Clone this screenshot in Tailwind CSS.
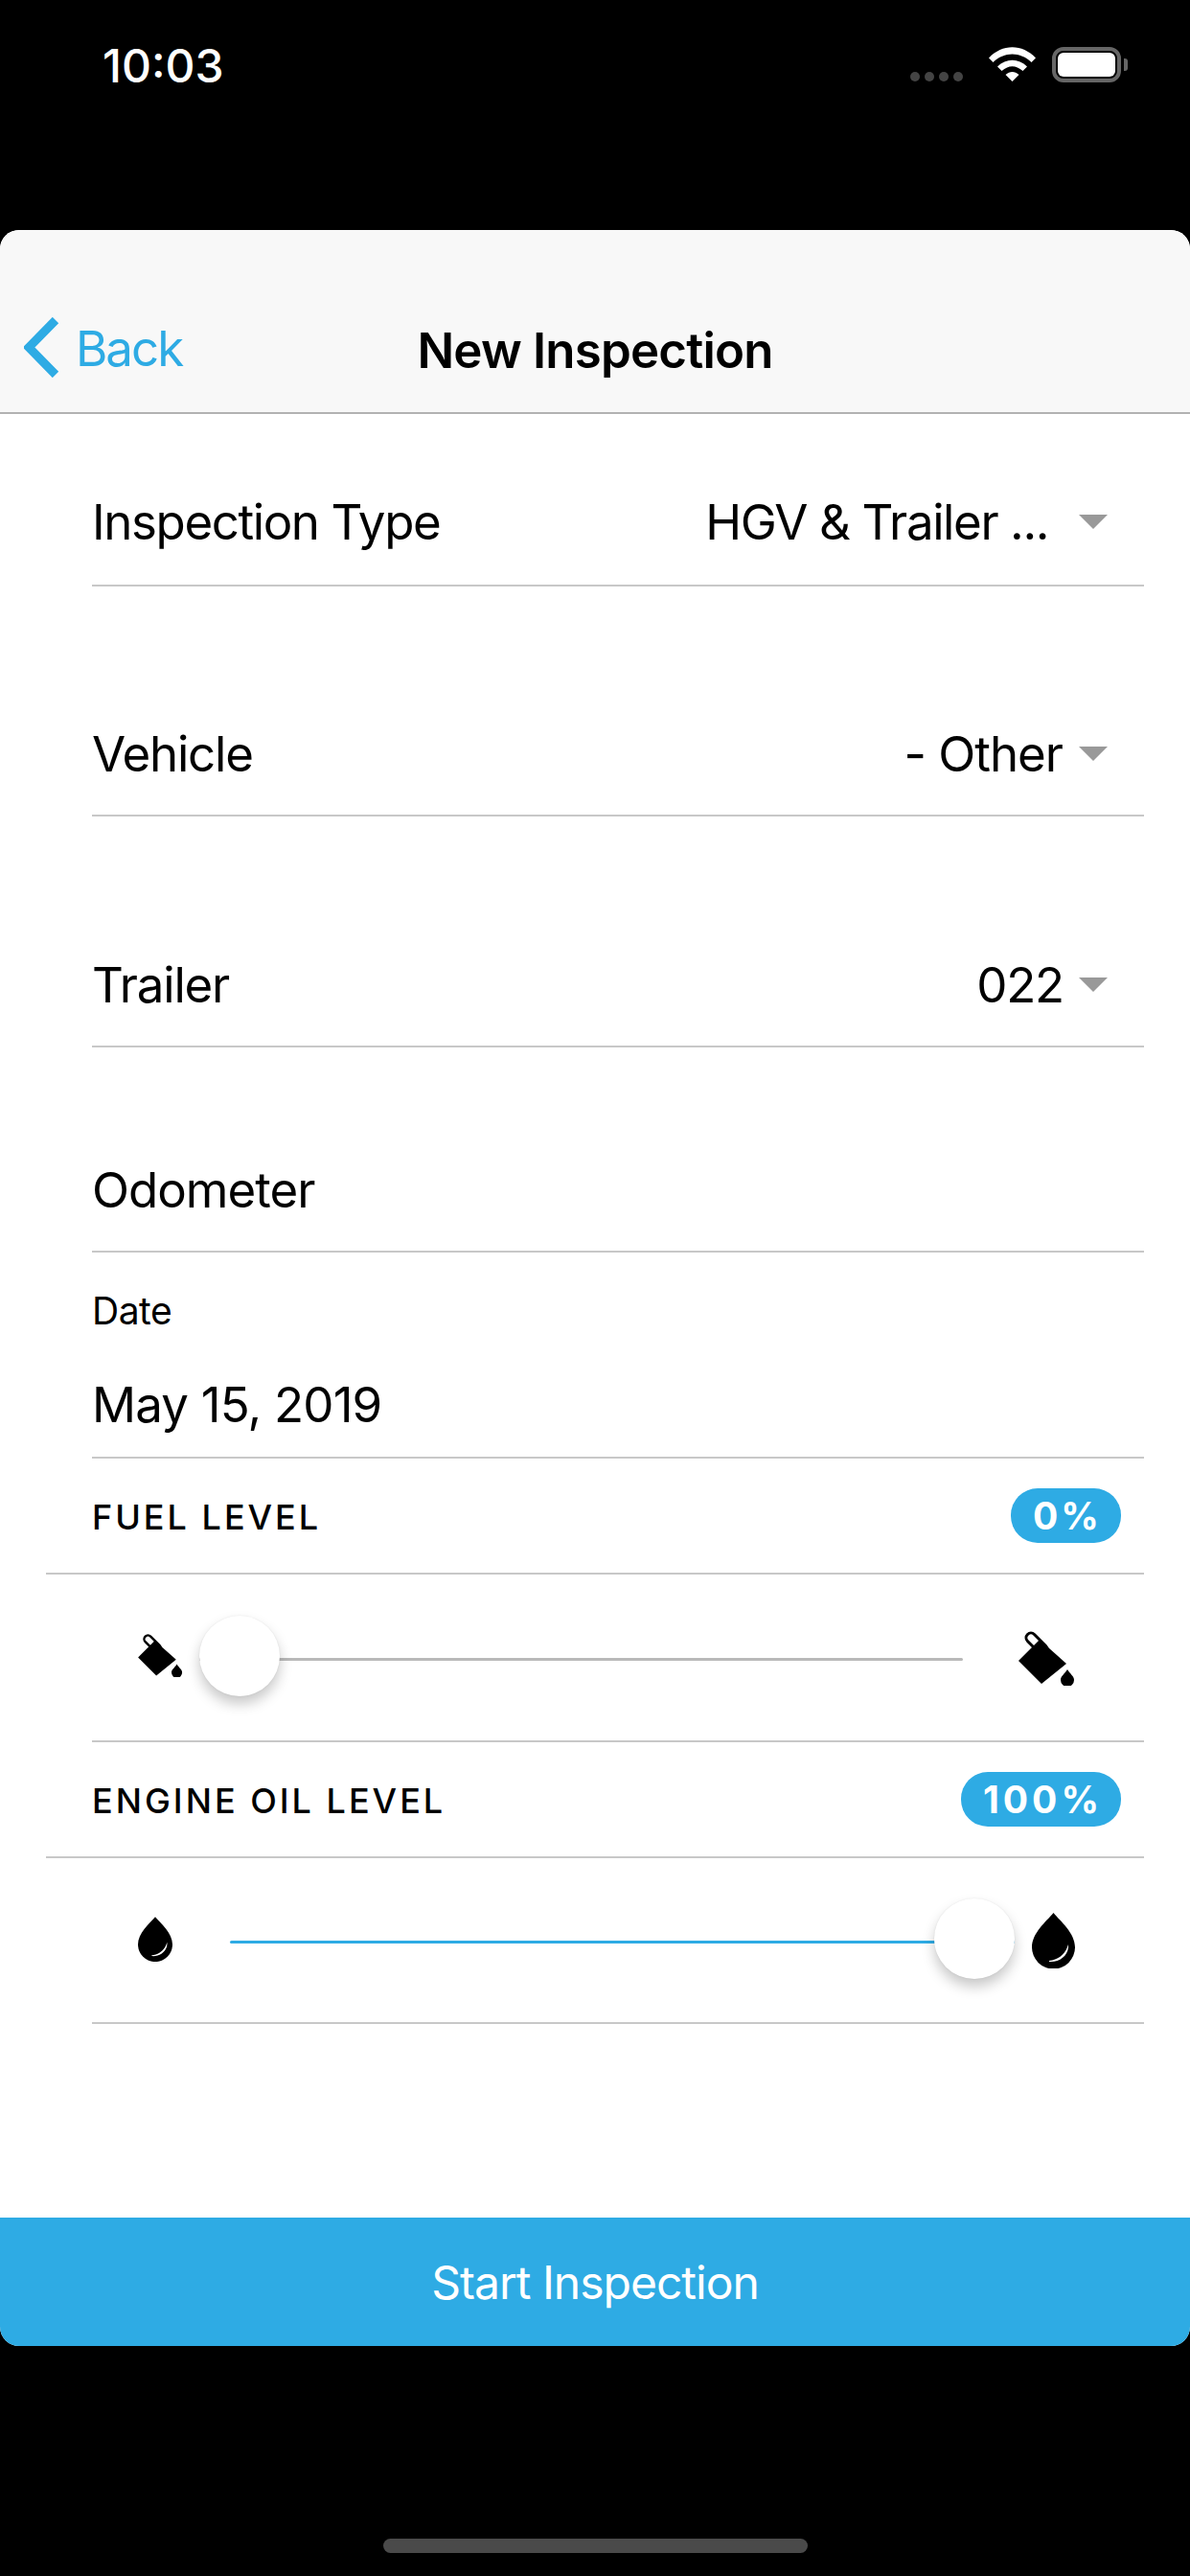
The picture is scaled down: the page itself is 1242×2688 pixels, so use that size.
<!DOCTYPE html>
<html lang="en">
<head>
    <meta charset="UTF-8">
    <title>New Inspection</title>
    <script src="https://cdn.jsdelivr.net/npm/@tailwindcss/browser@4"></script>
</head>
<body class="bg-black font-['Inter',sans-serif] text-black">
    <div class="w-[1242px] h-[2688px] flex flex-col bg-black overflow-hidden">
        <!-- Status bar -->
        <div class="h-[240px] shrink-0 flex items-start justify-between pl-[107px] pr-[65px] pt-[38px] text-white">
            <span class="text-[48px] leading-[62px] font-medium">10:03</span>
            <div class="flex items-start pt-[11px]">
                <div class="flex gap-[5px] mt-[26px] mr-[27px]">
                    <div class="w-[10px] h-[10px] rounded-full bg-[#444]"></div>
                    <div class="w-[10px] h-[10px] rounded-full bg-[#444]"></div>
                    <div class="w-[10px] h-[10px] rounded-full bg-[#444]"></div>
                    <div class="w-[10px] h-[10px] rounded-full bg-[#444]"></div>
                </div>
                <svg width="49" height="36" viewBox="0 0 49 36" class="mr-[17px]" fill="white">
                    <path d="M0 11.500C14 -3.500 35 -3.500 49 11.500L44.500 16C33 4.500 16 4.500 4.500 16Z"/>
                    <path d="M9 20.500C18 11.500 31 11.500 40 20.500L35.500 25C28 18.500 21 18.500 13.500 25Z"/>
                    <path d="M17.500 29C22 25 27 25 31.500 29L24.500 36Z"/>
                </svg>
                <div class="w-[72px] h-[37px] border-[4px] border-[#666] rounded-[12px] p-[2px]">
                    <div class="w-full h-full bg-white rounded-[6px]"></div>
                </div>
                <div class="w-[4px] h-[13px] mt-[12px] ml-[3px] bg-[#666] rounded-r-[3px]"></div>
            </div>
        </div>

        <!-- Sheet -->
        <div class="w-full h-[2208px] shrink-0 flex flex-col bg-white rounded-[20px] overflow-hidden">
            <!-- Nav bar -->
            <div class="h-[192px] shrink-0 relative flex items-end justify-center pb-[34px] bg-[#f8f8f8] border-b-[2px] border-[#b2b2b2]">
                <div class="absolute left-[25px] top-[91px] flex items-center gap-[17px] text-[#2eabe4]">
                    <svg width="37" height="63" viewBox="0 0 37 63" fill="none" stroke="#2eabe4" stroke-width="9">
                        <path d="M33 3L5 31.500L33 60"/>
                    </svg>
                    <span class="text-[51px] leading-[60px] tracking-[-2px] mt-[2px]">Back</span>
                </div>
                <span class="text-[51px] leading-[60px] font-semibold tracking-[-0.800px]">New Inspection</span>
            </div>

            <!-- Form -->
            <div class="flex-1 flex flex-col pr-[48px]">
                <div class="ml-[96px] h-[180px] flex items-end justify-between pb-[35px] border-b-[2px] border-[#c8c8c8]">
                    <span class="text-[51px] leading-[60px] tracking-[-1.400px]">Inspection Type</span>
                    <div class="flex items-center">
                        <span class="text-[51px] leading-[60px] tracking-[-1.400px]">HGV &amp; Trailer ...</span>
                        <div class="ml-[32px] mr-[38px] -mt-[2px] w-0 h-0 border-x-[15px] border-x-transparent border-t-[15px] border-t-[#999]"></div>
                    </div>
                </div>
                <div class="ml-[96px] h-[240px] flex items-end justify-between pb-[33px] border-b-[2px] border-[#c8c8c8]">
                    <span class="text-[51px] leading-[60px] tracking-[-1.200px]">Vehicle</span>
                    <div class="flex items-center">
                        <span class="text-[51px] leading-[60px] tracking-[-1px]">- Other</span>
                        <div class="ml-[17px] mr-[38px] -mt-[2px] w-0 h-0 border-x-[15px] border-x-transparent border-t-[15px] border-t-[#999]"></div>
                    </div>
                </div>
                <div class="ml-[96px] h-[241px] flex items-end justify-between pb-[33px] border-b-[2px] border-[#c8c8c8]">
                    <span class="text-[51px] leading-[60px] tracking-[-1.200px]">Trailer</span>
                    <div class="flex items-center">
                        <span class="text-[51px] leading-[60px] tracking-[-1.200px]">022</span>
                        <div class="ml-[16px] mr-[38px] -mt-[2px] w-0 h-0 border-x-[15px] border-x-transparent border-t-[15px] border-t-[#999]"></div>
                    </div>
                </div>
                <div class="ml-[96px] h-[214px] flex items-end pb-[33px] border-b-[2px] border-[#c8c8c8]">
                    <span class="text-[51px] leading-[60px] tracking-[-1px]">Odometer</span>
                </div>
                <div class="ml-[96px] h-[215px] flex flex-col border-b-[2px] border-[#c8c8c8]">
                    <span class="mt-[38px] text-[39px] leading-[46px] tracking-[-0.500px]">Date</span>
                    <span class="mt-[45px] text-[51px] leading-[60px] tracking-[-0.800px]">May 15, 2019</span>
                </div>

                <!-- Fuel level -->
                <div class="ml-[48px] h-[121px] pl-[48px] flex items-center justify-between border-b-[2px] border-[#c8c8c8]">
                    <span class="text-[36px] leading-[40px] font-medium tracking-[3px] mt-[2px]">FUEL LEVEL</span>
                    <span class="w-[115px] h-[57px] mr-[24px] pl-[3px] rounded-[28px] bg-[#2eabe4] text-white text-[39px] leading-[57px] font-bold tracking-[3px] text-center">0%</span>
                </div>
                <div class="ml-[96px] h-[175px] pl-[48px] flex items-center border-b-[2px] border-[#c8c8c8]">
                    <svg width="47" height="46" viewBox="0 0 59 58" class="shrink-0 -mt-[6px]">
                        <path d="M13 8L25 20" stroke="black" stroke-width="13" stroke-linecap="round"/>
                        <path d="M13 8L25 20" stroke="white" stroke-width="7" stroke-linecap="round"/>
                        <path d="M0 32L22 10L50 35L24 56Z"/>
                        <path d="M51 41C54 46 58 48 58 52A7 7 0 0 1 44 52C44 48 48 46 51 41Z"/>
                    </svg>
                    <div class="relative ml-[17px] w-[797px] h-[3px] mt-[3px] bg-[#b9b9b9] rounded-r-full">
                        <div class="absolute left-0 top-[-44px] w-[84px] h-[84px] rounded-full bg-white shadow-[0_8px_14px_rgba(0,0,0,0.22),0_0_2px_rgba(0,0,0,0.08)]"></div>
                    </div>
                    <svg width="59" height="58" viewBox="0 0 59 58" class="shrink-0 ml-[58px]">
                        <path d="M13 8L25 20" stroke="black" stroke-width="13" stroke-linecap="round"/>
                        <path d="M13 8L25 20" stroke="white" stroke-width="7" stroke-linecap="round"/>
                        <path d="M0 32L22 10L50 35L24 56Z"/>
                        <path d="M51 41C54 46 58 48 58 52A7 7 0 0 1 44 52C44 48 48 46 51 41Z"/>
                    </svg>
                </div>

                <!-- Engine oil level -->
                <div class="ml-[48px] h-[121px] pl-[48px] flex items-center justify-between border-b-[2px] border-[#c8c8c8]">
                    <span class="text-[36px] leading-[40px] font-medium tracking-[3px] mt-[2px]">ENGINE OIL LEVEL</span>
                    <span class="w-[167px] h-[57px] mr-[24px] pl-[4px] rounded-[28px] bg-[#2eabe4] text-white text-[39px] leading-[57px] font-bold tracking-[4px] text-center">100%</span>
                </div>
                <div class="ml-[96px] h-[173px] pl-[48px] flex items-center border-b-[2px] border-[#c8c8c8]">
                    <svg width="36" height="47" viewBox="0 0 45 58" class="shrink-0 -mt-[3px]">
                        <path d="M22.500 0C30 9 45 21 45 36A22.500 22.500 0 0 1 0 36C0 21 15 9 22.500 0Z"/>
                        <path d="M38 33C39 44 29 52 18 51L18 50C28 49 35 43 38 33Z" fill="white"/>
                    </svg>
                    <div class="relative ml-[60px] w-[819px] h-[3px] mt-[3px] bg-[#2eabe4] rounded-l-full">
                        <div class="absolute right-0 top-[-44px] w-[84px] h-[84px] rounded-full bg-white shadow-[0_8px_14px_rgba(0,0,0,0.22),0_0_2px_rgba(0,0,0,0.08)]"></div>
                    </div>
                    <svg width="45" height="58" viewBox="0 0 45 58" class="shrink-0 ml-[18px]">
                        <path d="M22.500 0C30 9 45 21 45 36A22.500 22.500 0 0 1 0 36C0 21 15 9 22.500 0Z"/>
                        <path d="M38 33C39 44 29 52 18 51L18 50C28 49 35 43 38 33Z" fill="white"/>
                    </svg>
                </div>
            </div>

            <!-- Start button -->
            <div class="h-[134px] shrink-0 flex items-center justify-center bg-[#2eabe4] text-white">
                <span class="text-[48px] leading-[60px] tracking-[-1px] mt-[2px]">Start Inspection</span>
            </div>
        </div>

        <!-- Home indicator -->
        <div class="mt-[201px] mx-auto w-[443px] h-[15px] shrink-0 rounded-full bg-[#4a4a4a]"></div>
    </div>
</body>
</html>
